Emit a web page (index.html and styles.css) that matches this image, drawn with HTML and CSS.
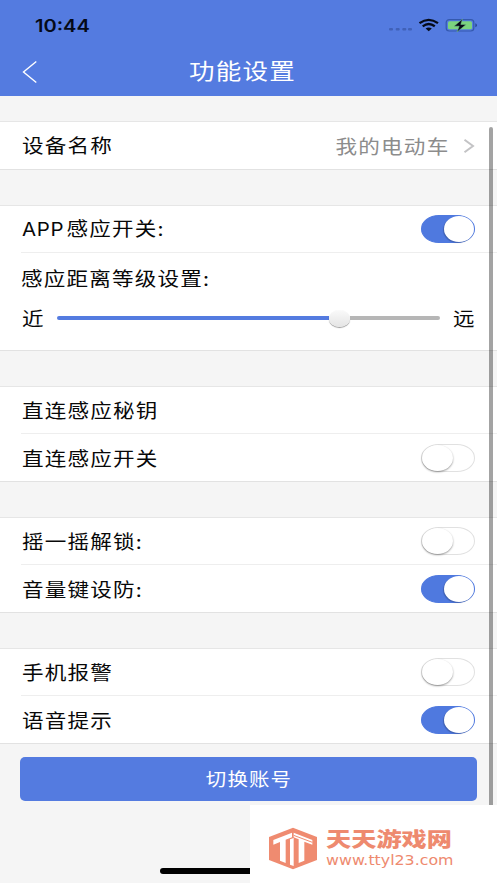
FILE: index.html
```html
<!DOCTYPE html>
<html lang="zh-CN">
<head>
<meta charset="utf-8">
<title>功能设置</title>
<link rel="stylesheet" href="styles.css">
</head>
<body>
<div class="screen">
  <header class="header">
    <div class="status">
      <span class="time">10:44</span>
      <svg class="status-icons" width="90" height="18" viewBox="0 0 90 18">
        <g fill="#4061b8"><rect x="1" y="12" width="4" height="2.600" rx="1"/><rect x="7.700" y="12" width="4" height="2.600" rx="1"/><rect x="14.300" y="12" width="4" height="2.600" rx="1"/><rect x="20" y="12" width="4" height="2.600" rx="1"/></g>
        <g fill="none" stroke="#050a18" stroke-width="2.300"><path d="M31.500 7.100Q40.700 .5 50 7.100"/><path d="M34.700 10.300Q40.700 5.800 46.800 10.300"/></g>
        <path d="M37.600 12.500Q40.700 10.300 43.800 12.500L40.700 15.200Z" fill="#050a18"/>
        <rect x="58.200" y="3.600" width="27.600" height="11.400" rx="3" fill="none" stroke="#3459ad" stroke-width="1.200"/>
        <rect x="60" y="5.300" width="24" height="8" rx="1.500" fill="#7bd37f"/>
        <path d="M87.300 7.200v4Q89 10.500 89 9.200T87.300 7.200Z" fill="#294a94"/>
        <path d="M74.500 3L66 10.200h5.200L69 16l9.200-7.600h-5.400Z" fill="#050a18" stroke="#78c890" stroke-width=".5"/>
      </svg>
    </div>
    <div class="nav">
      <svg class="back" width="16" height="24" viewBox="0 0 16 24"><path d="M14.300 1.500L1.500 12L14.300 22.500" fill="none" stroke="#fff" stroke-width="1.400"/></svg>
      <h1 class="title">功能设置</h1>
    </div>
  </header>
  <main class="content">
    <section class="card">
      <div class="row"><span class="label">设备名称</span>
        <span class="value">我的电动车</span>
        <svg class="chevron" width="12" height="16" viewBox="0 0 12 16"><path d="M1.500 1.700L10 8L1.500 14.300" fill="none" stroke="#c3c3c5" stroke-width="2"/></svg>
      </div>
    </section>
    <section class="card">
      <div class="row"><span class="label"><span class="latin">APP</span>感应开关:</span><span class="switch on"></span></div>
      <div class="range">
        <span class="label range-title">感应距离等级设置:</span>
        <div class="range-line">
          <span class="label">近</span>
          <div class="track"><div class="fill"></div><div class="thumb"></div><div class="rest"></div></div>
          <span class="label">远</span>
        </div>
      </div>
    </section>
    <section class="card">
      <div class="row"><span class="label">直连感应秘钥</span></div>
      <div class="row"><span class="label">直连感应开关</span><span class="switch"></span></div>
    </section>
    <section class="card">
      <div class="row"><span class="label">摇一摇解锁:</span><span class="switch"></span></div>
      <div class="row"><span class="label">音量键设防:</span><span class="switch on"></span></div>
    </section>
    <section class="card">
      <div class="row"><span class="label">手机报警</span><span class="switch"></span></div>
      <div class="row"><span class="label">语音提示</span><span class="switch on"></span></div>
    </section>
    <button class="account"><span>切换账号</span></button>
  </main>
  <div class="scrollbar"></div>
  <div class="home"></div>
  <aside class="watermark">
    <svg class="logo" width="50" height="43" viewBox="0 0 150 129">
      <path d="M75 2L147 30V99L75 127L3 99V30Z" fill="#ef8b70"/>
      <path d="M16 39L72 17V31L53 38V108L36 101V45L16 53Z" fill="#fff"/>
      <path d="M66 37L77 33V117L66 113Z" fill="#fff"/>
      <path d="M77 17L133 39V53L109 44V101L92 108V37L77 31Z" fill="#fff"/>
      <path d="M77 25L133 46" stroke="#ef8b70" stroke-width="3"/>
    </svg>
    <div class="brand"><strong>天天游戏网</strong><span>www.ttyl23.com</span></div>
  </aside>
</div>
</body>
</html>
```
FILE: styles.css
```css
* { box-sizing: border-box; }
body { margin: 0; }
.screen {
  position: relative;
  width: 497px;
  height: 883px;
  overflow: hidden;
  background: #f5f5f5;
  color: #080808;
  font-family: "Noto Sans CJK SC", sans-serif;
}
.header { height: 96px; background: #547be0; }
.status {
  display: flex;
  justify-content: space-between;
  height: 48px;
  padding: 16px 19px 0 35px;
}
.time {
  padding-top: 1px;
  font: 600 17px/18px Inter, sans-serif;
  color: #050a18;
  transform: scaleX(1.18);
  transform-origin: left;
}
.nav {
  display: grid;
  grid-template-columns: 54px 1fr 66px;
  align-items: center;
  height: 48px;
}
.back { margin-left: 22px; }
.title {
  margin: -6px 0 0;
  text-align: center;
  color: #fff;
  font-size: 22px;
  line-height: 32px;
  font-weight: 400;
  letter-spacing: 1px;
  transform: scaleX(1.16);
}
.content { display: flex; flex-direction: column; gap: 35px; padding-top: 25px; }
.card {
  background: #fff;
  border-top: 1px solid #e6e6e6;
  border-bottom: 1px solid #e2e2e2;
}
.row {
  position: relative;
  display: flex;
  align-items: center;
  height: 47px;
  padding: 0 22px;
}
.row:not(:last-child) { height: 46px; }
.row + .row { height: 48px; padding-top: 2px; }
.row + .row::before, .range::before {
  content: "";
  position: absolute;
  top: 0;
  left: 21px;
  right: 0;
  height: 1px;
  background: #eee;
}
.label {
  margin-top: -1px;
  font-size: 19px;
  line-height: 28px;
  letter-spacing: 1.050px;
  white-space: nowrap;
  transform: scaleX(1.135);
  transform-origin: left;
}
.latin { font-family: Inter, sans-serif; font-size: 18px; letter-spacing: .6px; margin-right: 2px; }
.value {
  margin: -1px 13px 0 auto;
  color: #8c8c8c;
  font-size: 19px;
  letter-spacing: 1.100px;
  transform: scaleX(1.135);
  transform-origin: right;
}
.switch {
  position: relative;
  width: 54px;
  height: 28px;
  margin-left: auto;
  border: 1px solid #e1e1e1;
  border-radius: 18px / 14px;
}
.switch::after {
  content: "";
  position: absolute;
  top: 0;
  left: 0;
  width: 31px;
  height: 26px;
  border-radius: 50%;
  background: #fff;
  box-shadow: 0 1px 2px #0006;
}
.switch.on { background: #4f79df; border-color: #4f79df; }
.switch.on::after { left: 22px; width: 30px; box-shadow: -1px 1px 1px #0003; }
.range { position: relative; height: 98px; padding: 13px 22px 0; }
.range-title { display: block; margin-left: -1px; }
.range-line { display: flex; align-items: center; height: 28px; margin-top: 12px; }
.track { display: flex; align-items: center; width: 383px; margin: 0 13px 0 15px; }
.fill { width: 272px; height: 4px; border-radius: 2px 0 0 2px; background: #547be0; }
.thumb {
  width: 21px;
  height: 17px;
  border-radius: 50%;
  background: linear-gradient(#fafafa, #e4e4e4);
  box-shadow: 0 1px 1px #0006;
}
.rest { flex: 1; height: 4px; border-radius: 0 2px 2px 0; background: #b6b6b6; }
.account {
  height: 44px;
  margin: -22px 20px 0;
  padding: 0 0 2px;
  border: 0;
  border-radius: 5px;
  background: #547be0;
  color: #fff;
  font: 400 18px/40px "Noto Sans CJK SC", sans-serif;
  letter-spacing: 1px;
}
.account span { display: inline-block; transform: scaleX(1.135); }
.scrollbar {
  position: absolute;
  left: 489px;
  top: 127px;
  width: 4px;
  height: 700px;
  border-radius: 2px;
  background: #0000005c;
}
.home {
  position: absolute;
  left: 160px;
  bottom: 9px;
  width: 177px;
  height: 6px;
  border-radius: 3px;
  background: #000;
}
.watermark {
  position: absolute;
  left: 250px;
  top: 805px;
  width: 247px;
  height: 78px;
  display: flex;
  align-items: center;
  gap: 8px;
  padding: 8px 0 0 18px;
  background: #fff;
}
.logo { flex: none; }
.brand { display: flex; flex-direction: column; color: #ee8a6f; white-space: nowrap; }
.brand strong {
  font-size: 20px;
  line-height: 22px;
  font-weight: 900;
  transform: scaleX(1.26);
  transform-origin: left;
}
.brand span {
  padding-top: 1px;
  font: 400 14px/18px "DejaVu Sans", sans-serif;
  transform: scaleX(1.13);
  transform-origin: left;
}
```
